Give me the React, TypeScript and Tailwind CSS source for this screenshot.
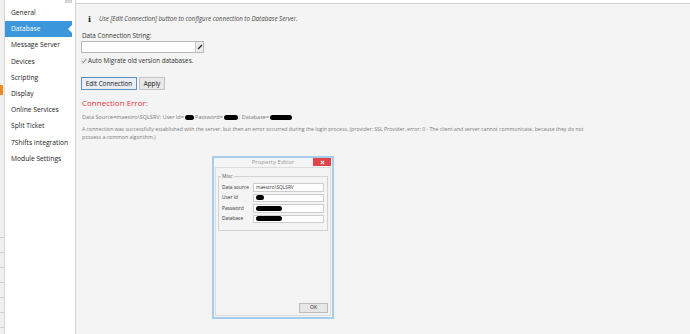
import React from "react";

const items = [
  "General",
  "Database",
  "Message Server",
  "Devices",
  "Scripting",
  "Display",
  "Online Services",
  "Split Ticket",
  "7Shifts Integration",
  "Module Settings",
];

function Blob({ w }: { w: number }) {
  return <span className="inline-block h-[5px] bg-black rounded-full align-middle mx-[1px]" style={{ width: w }} />;
}

export default function App() {
  return (
    <div className="w-[690px] h-[334px] flex bg-[#f4f4f4] overflow-hidden font-['Open_Sans',sans-serif] text-[#333]">
      {/* left strip */}
      <div className="w-[5px] shrink-0 bg-[#f0f0f0] border-r border-[#d6d6d6] flex flex-col">
        <div className="h-[85px]" />
        <div className="h-[10px] w-[3px] bg-[#f08a1c]" />
        <div className="h-[128px]" />
        {[0, 1, 2, 3, 4, 5, 6].map((i) => (
          <div key={i} className="h-[15px] border-b border-[#cfcfcf]" />
        ))}
      </div>
      {/* sidebar */}
      <div className="w-[71px] shrink-0 bg-white border-r border-[#d0d0d0] flex flex-col">
        <div className="h-[5px] flex justify-end pr-[3px]">
          <div className="w-[7px] h-[3px] bg-[#e4e4e4] border border-[#cfcfcf]" />
        </div>
        {items.map((it) => {
          const sel = it === "Database";
          return (
            <div
              key={it}
              className={
                "relative h-[16.2px] flex items-center pl-[6px] text-[6.7px] mr-[3px] " +
                (sel ? "bg-[#3b96dc] text-white" : "text-[#222]")
              }
            >
              {it}
              {sel && (
                <div className="absolute right-0 top-[4px] w-0 h-0 border-y-[4px] border-y-transparent border-r-[4px] border-r-white" />
              )}
            </div>
          );
        })}
      </div>
      {/* main */}
      <div className="flex-1 flex flex-col">
        <div className="h-[4px] bg-white border-b border-[#d2d2d2]" />
        <div className="pl-[5px] pt-[10px] flex flex-col">
          <div className="flex items-center h-[10px] pl-[7px]">
            <span className="font-['DejaVu_Serif',serif] font-bold text-[8px] text-[#222] w-[11px]">i</span>
            <span className="italic text-[6.2px] text-[#444]">
              Use [Edit Connection] button to configure connection to Database Server.
            </span>
          </div>
          <div className="mt-[8px] text-[6.3px] text-[#333] h-[8px] flex items-center pl-[1px]">
            Data Connection String:
          </div>
          <div className="mt-[1px] w-[123px] h-[12px] bg-white border border-[#b8b8b8] flex justify-end">
            <div className="w-[8px] h-full bg-[#ececec] border-l border-[#c8c8c8] flex items-center justify-center">
              <svg width="6" height="6" viewBox="0 0 6 6">
                <path d="M1 5 L5 1" stroke="#222" strokeWidth="1.2" />
              </svg>
            </div>
          </div>
          <div className="mt-[3px] flex items-center h-[10px] text-[6.3px] text-[#333]">
            <svg width="6" height="6" viewBox="0 0 6 6" className="mr-[1px]">
              <rect x="0.3" y="0.3" width="5.4" height="5.4" fill="none" stroke="#d4d4d4" strokeWidth="0.5" />
              <path d="M0.9 3 L2.3 4.6 L5.2 1" stroke="#666" strokeWidth="0.9" fill="none" />
            </svg>
            Auto Migrate old version databases.
          </div>
          <div className="mt-[11px] flex gap-[2px] h-[13px]">
            <div className="w-[56px] h-full border border-[#5f8fc0] bg-[#e9eef4] text-[6.3px] flex items-center justify-center text-[#111]">
              Edit Connection
            </div>
            <div className="w-[26px] h-full border border-[#c4c4c4] bg-[#e8e8e8] text-[6.3px] flex items-center justify-center text-[#111]">
              Apply
            </div>
          </div>
          <div className="mt-[8px] text-[8px] text-[#e8323b] h-[10px] flex items-center pl-[1px]">
            Connection Error:
          </div>
          <div className="mt-[5px] text-[5.5px] text-[#7a7a7a] h-[8px] flex items-center pl-[1px]">
            Data Source=maestro\SQLSRV; User Id=
            <Blob w={9} />
            Password=
            <Blob w={14} />
            ; Database=
            <Blob w={22} />
          </div>
          <div className="mt-[5px] text-[5.18px] leading-[7.5px] text-[#7a7a7a] w-[515px] pl-[1px]">
            A connection was successfully established with the server, but then an error occurred during the login process. (provider: SSL Provider, error: 0 - The client and server cannot communicate, because they do not possess a common algorithm.)
          </div>
          {/* dialog */}
          <div className="mt-[15px] ml-[131px] w-[122px] h-[163px] border-2 border-[#a6cdeb] bg-[#f5f5f5] flex flex-col">
            <div className="h-[9px] relative flex items-center justify-center text-[6px] text-[#9a9a9a]">
              Property Editor
              <div className="absolute right-[1px] top-0 w-[18px] h-[8px] bg-[#e2434a] flex items-center justify-center">
                <svg width="5" height="5" viewBox="0 0 5 5">
                  <path d="M0.8 0.8 L4.2 4.2 M4.2 0.8 L0.8 4.2" stroke="white" strokeWidth="1.1" />
                </svg>
              </div>
            </div>
            <div className="flex-1 mx-[1px] mb-[1px] border border-[#dcdcdc] bg-[#f4f4f4] flex flex-col px-[2px] pt-[6px] pb-[2px]">
              <div className="relative border border-[#d2d2d2] h-[55px] mt-[2px] pt-[6px] px-[3px] flex flex-col gap-[2px]">
                <span className="absolute -top-[4px] left-[2px] bg-[#f4f4f4] px-[1px] text-[5px] text-[#555] leading-[7px]">Misc</span>
                {[
                  ["Data source", "maestro\\SQLSRV", 0],
                  ["User Id", "", 8],
                  ["Password", "", 26],
                  ["Database", "", 26],
                ].map(([l, v, b]) => (
                  <div key={l as string} className="flex items-center h-[8.5px]">
                    <span className="w-[31px] text-[4.8px] text-[#333]">{l}</span>
                    <div className="flex-1 h-full bg-white border border-[#cdcdcd] flex items-center pl-[2px] text-[4.8px] text-[#333] overflow-hidden">
                      {v}
                      {(b as number) > 0 && (
                        <span className="inline-block h-[5px] bg-black rounded-full" style={{ width: b as number }} />
                      )}
                    </div>
                  </div>
                ))}
              </div>
              <div className="flex-1" />
              <div className="flex justify-end">
                <div className="w-[29px] h-[10px] border border-[#bcbcbc] bg-[#e6e6e6] text-[5px] flex items-center justify-center text-[#222]">
                  OK
                </div>
              </div>
            </div>
          </div>
        </div>
      </div>
    </div>
  );
}
